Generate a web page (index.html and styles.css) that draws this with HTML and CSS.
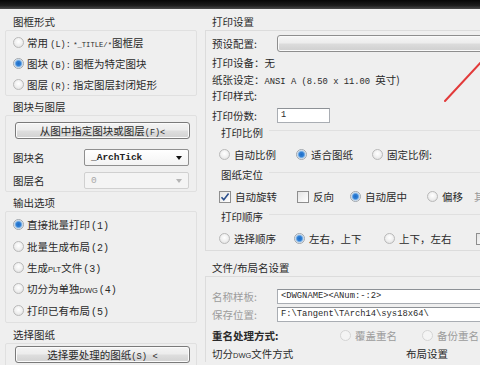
FILE: index.html
```html
<!DOCTYPE html>
<html>
<head>
<meta charset="utf-8">
<link rel="stylesheet" href="styles.css">
</head>
<body>
<div class="topbar"></div>
<div class="dialog">
  <div class="left">
    <div class="gtitle t1">图框形式</div>
    <div class="box b1">
      <div class="opt"><span class="radio"></span><span class="lbl">常用 <span class="m">(L):</span> <span class="m s7">*_TITLE/*</span>图框层</span></div>
      <div class="opt"><span class="radio on"></span><span class="lbl">图块 <span class="m">(B):</span> 图框为特定图块</span></div>
      <div class="opt"><span class="radio"></span><span class="lbl">图层 <span class="m">(R):</span> 指定图层封闭矩形</span></div>
    </div>
    <div class="gtitle t2">图块与图层</div>
    <div class="box b2">
      <div class="btn b-pick"><span>从图中指定图块或图层<span class="m">(F)&lt;</span></span></div>
      <div class="frow r-blk"><span class="flbl">图块名</span><div class="combo"><span class="m cv">_ArchTick</span><span class="arrow"></span></div></div>
      <div class="frow r-lay"><span class="flbl">图层名</span><div class="combo dis"><span class="m cv">0</span><span class="arrow"></span></div></div>
    </div>
    <div class="gtitle t3">输出选项</div>
    <div class="box b3">
      <div class="opt o2"><span class="radio on"></span><span class="lbl">直接批量打印<span class="m n">(1)</span></span></div>
      <div class="opt o2"><span class="radio"></span><span class="lbl">批量生成布局<span class="m n">(2)</span></span></div>
      <div class="opt o2"><span class="radio"></span><span class="lbl">生成<span class="sm">PLT</span>文件<span class="m n">(3)</span></span></div>
      <div class="opt o2"><span class="radio"></span><span class="lbl">切分为单独<span class="sm">DWG</span><span class="m n">(4)</span></span></div>
      <div class="opt o2"><span class="radio"></span><span class="lbl">打印已有布局<span class="m n">(5)</span></span></div>
    </div>
    <div class="gtitle t4">选择图纸</div>
    <div class="box b4">
      <div class="btn b-sel"><span>选择要处理的图纸<span class="m s9">(S) &lt;</span></span></div>
    </div>
  </div>

  <div class="right">
    <div class="gtitle rt1">打印设置</div>
    <div class="rbox">
      <div class="rrow r-preset"><span class="rl">预设配置:</span><div class="pcombo"></div></div>
      <div class="line l1">打印设备：无</div>
      <div class="line">纸张设定：<span class="m s9">ANSI A (8.50 x 11.00 </span>英寸)</div>
      <div class="line l3">打印样式:</div>
      <div class="rrow r-copies"><span class="rl">打印份数:</span><div class="input small"><span class="m">1</span></div></div>

      <div class="sub st1">打印比例</div>
      <div class="chrow">
        <span class="it i1"><span class="radio"></span>自动比例</span>
        <span class="it i2"><span class="radio on"></span>适合图纸</span>
        <span class="it i3"><span class="radio"></span>固定比例:</span>
      </div>
      <div class="sub">图纸定位</div>
      <div class="chrow">
        <span class="it i1"><span class="check on"><svg viewBox="0 0 12 12" width="12" height="12"><path d="M2.5 6.2 L4.8 8.8 L9.6 2.6" fill="none" stroke="#2b4f8c" stroke-width="1.6"/></svg></span>自动旋转</span>
        <span class="it i2b"><span class="check"></span>反向</span>
        <span class="it i3b"><span class="radio on"></span>自动居中</span>
        <span class="it i4"><span class="radio"></span>偏移</span>
        <span class="it i5">其</span>
      </div>
      <div class="sub">打印顺序</div>
      <div class="chrow">
        <span class="it i1"><span class="radio"></span>选择顺序</span>
        <span class="it i2c"><span class="radio on"></span>左右，上下</span>
        <span class="it i3c"><span class="radio"></span>上下，左右</span>
        <span class="it i6"><span class="check"></span></span>
      </div>
    </div>

    <div class="gtitle rt2">文件/布局名设置</div>
    <div class="rbox2">
      <div class="rrow r-name"><span class="rl dim">名称样板:</span><div class="input wide"><span class="m s8">&lt;DWGNAME&gt;&lt;ANum:-:2&gt;</span></div></div>
      <div class="rrow r-save"><span class="rl dim">保存位置:</span><div class="input wide"><span class="m s8">F:\Tangent\TArch14\sys18x64\</span></div></div>
      <div class="rrow r-dup"><span class="rl2">重名处理方式:</span>
        <span class="it i7 dim"><span class="radio dis"></span>覆盖重名</span>
        <span class="it i8 dim"><span class="radio dis"></span>备份重名</span>
      </div>
      <div class="rrow r-split"><span class="rl3">切分<span class="sm">DWG</span>文件方式</span><span class="lay">布局设置</span></div>
    </div>
  </div>
</div>
<svg class="annot" width="480" height="365" viewBox="0 0 480 365"><line x1="445" y1="101" x2="482" y2="61" stroke="#e23a3a" stroke-width="2" stroke-linecap="round"/></svg>
</body>
</html>
```
FILE: styles.css
```css
html, body { margin: 0; padding: 0; }
body {
  width: 480px; height: 365px; overflow: hidden; position: relative;
  background: #efefef;
  font-family: "Noto Sans CJK SC", "Noto Sans", sans-serif;
  font-size: 10.5px; color: #2a2a2a;
}
.topbar {
  height: 9px;
  background: linear-gradient(#050505, #1b1b1b 60%, #4a4a4a);
}
.dialog { display: flex; }
.m { font-family: "Liberation Mono", monospace; font-size: 8.5px; }
.m.n { font-size: 10px; margin-left: 1px; }
.s7 { font-size: 7.2px; }
.s8 { font-size: 8.8px; }
.s9 { font-size: 8.8px; }
.sm { font-family: "Liberation Sans", sans-serif; font-size: 7.5px; }
.dim { color: #9c9c9c; }

/* left column */
.left { width: 200px; flex: none; padding-top: 5px; }
.gtitle { height: 16px; line-height: 16px; padding-left: 13px; }
.t2, .t3 { margin-top: 3px; }
.t4 { margin-top: 4px; }
.box {
  margin-left: 5px; width: 190px;
  border: 1px solid #e0e0e0; border-radius: 2px;
}
.b1 { padding: 1px 0 0; }
.opt { height: 21px; display: flex; align-items: center; padding-left: 7px; gap: 3px; }
.o2 { height: 21.4px; }
.b3 { padding: 2px 0 1px; }
.b2 { padding: 6px 0 1px; }
.b4 { padding: 2px 0 4px; }
.btn {
  margin-left: 9px; width: 175px; height: 17px; box-sizing: border-box;
  border: 1px solid #7a7a7a; border-radius: 3px;
  background: linear-gradient(#f4f4f4, #ececec 48%, #dedede 52%, #d2d2d2);
  display: flex; align-items: center; justify-content: center;
  box-shadow: inset 0 0 0 1px #fbfbfb;
}
.frow { height: 19px; display: flex; align-items: center; padding-left: 7px; }
.r-blk { margin-top: 9px; }
.r-lay { margin-top: 4px; }
.flbl { width: 71px; }
.combo {
  width: 105px; height: 17px; box-sizing: border-box;
  border: 1px solid #8f8f8f; border-radius: 2px;
  background: linear-gradient(#ffffff, #f3f3f3);
  display: flex; align-items: center; padding-left: 6px; position: relative;
}
.combo .cv { font-size: 9.5px; font-weight: bold; color: #222; }
.combo .arrow {
  position: absolute; right: 6px; top: 6px;
  border-left: 3.5px solid transparent; border-right: 3.5px solid transparent;
  border-top: 4px solid #111;
}
.combo.dis { border-color: #d0d0d0; background: #f4f4f4; }
.combo.dis .cv { color: #a8a8a8; font-weight: normal; }
.combo.dis .arrow { border-top-color: #b5b5b5; }

/* radios / checks */
.radio {
  width: 11px; height: 11px; box-sizing: border-box; flex: none;
  border-radius: 50%; border: 1px solid #b9b9b9;
  background: radial-gradient(circle at 50% 40%, #ffffff 0, #f0f0f0 50%, #dadada 100%);
  display: inline-block; position: relative;
}
.radio.on {
  border-color: #9fa6ad;
  background: radial-gradient(circle at 50% 50%, #1f6cc4 0, #2e7fd6 2.2px, #8dbbe8 3.4px, #e9eef3 4.4px);
}
.radio.dis { border-color: #d4d4d4; background: #f4f4f4; }
.check {
  width: 12px; height: 12px; box-sizing: border-box; flex: none;
  border: 1px solid #8e8e8e;
  background: linear-gradient(135deg, #e4e4e4, #ffffff);
  display: inline-block; position: relative;
}
.check svg { position: absolute; left: -1px; top: -1px; }

/* right column */
.right { width: 290px; flex: none; padding-top: 5px; padding-left: 5px; }
.right .gtitle { padding-left: 7px; }
.rbox {
  border-left: 1px solid #dcdcdc; border-top: 1px solid #dcdcdc;
  border-bottom: 1px solid #dcdcdc;
  padding: 3px 0 2px 6px; height: 221px; box-sizing: border-box;
}
.rrow { display: flex; align-items: center; height: 17px; white-space: nowrap; }
.line { height: 17px; line-height: 17px; white-space: nowrap; }
.l1 { margin-top: 2px; }
.l3 { height: 16px; line-height: 16px; }
.rl { width: 65px; flex: none; }
.r-preset { height: 18px; }
.pcombo {
  width: 240px; height: 17px; box-sizing: border-box;
  border: 1px solid #8e8e8e; border-radius: 3px;
  background: linear-gradient(#f6f6f6, #ececec 48%, #dcdcdc 52%, #cfcfcf);
  box-shadow: inset 0 0 0 1px #fafafa;
}
.r-copies { margin-top: 3px; height: 16px; }
.input {
  height: 15px; box-sizing: border-box; background: #fff;
  border: 1px solid #a9adb3; border-top-color: #8d9196;
  display: flex; align-items: center; padding-left: 3px;
}
.input.small { width: 53px; }
.input.wide { width: 240px; }
.sub {
  height: 16px; line-height: 16px; padding-left: 9px; margin-top: 2px;
  display: flex; align-items: center; gap: 6px;
}
.sub::after { content: ""; flex: 1; border-top: 1px solid #e0e0e0; margin-top: -6px; }
.chrow { height: 21px; position: relative; margin-top: 2px; }
.it { position: absolute; top: 0; height: 21px; display: flex; align-items: center; gap: 4px; white-space: nowrap; }
.i1 { left: 7px; }
.i2 { left: 84px; }
.i3 { left: 160px; }
.i2b { left: 85px; }
.i3b { left: 138px; }
.i4 { left: 215px; }
.i5 { left: 262px; color: #999; }
.i2c { left: 82px; }
.i3c { left: 172px; }
.i6 { left: 264px; }
.sub + .chrow { margin-top: 3px; }

.rt2 { margin-top: 9px; }
.rbox2 {
  border-left: 1px solid #dcdcdc; border-top: 1px solid #dcdcdc;
  padding: 11px 0 0 6px;
}
.r-name { height: 16px; }
.r-save { height: 16px; margin-top: 2px; }
.r-dup { height: 17px; margin-top: 5px; position: relative; }
.rl2 { font-weight: bold; }
.i7 { left: 128px; height: 17px; }
.i8 { left: 210px; height: 17px; }
.r-split { height: 17px; margin-top: 1px; }
.rl3 { width: 194px; flex: none; }
.annot { position: absolute; left: 0; top: 0; pointer-events: none; }
```
